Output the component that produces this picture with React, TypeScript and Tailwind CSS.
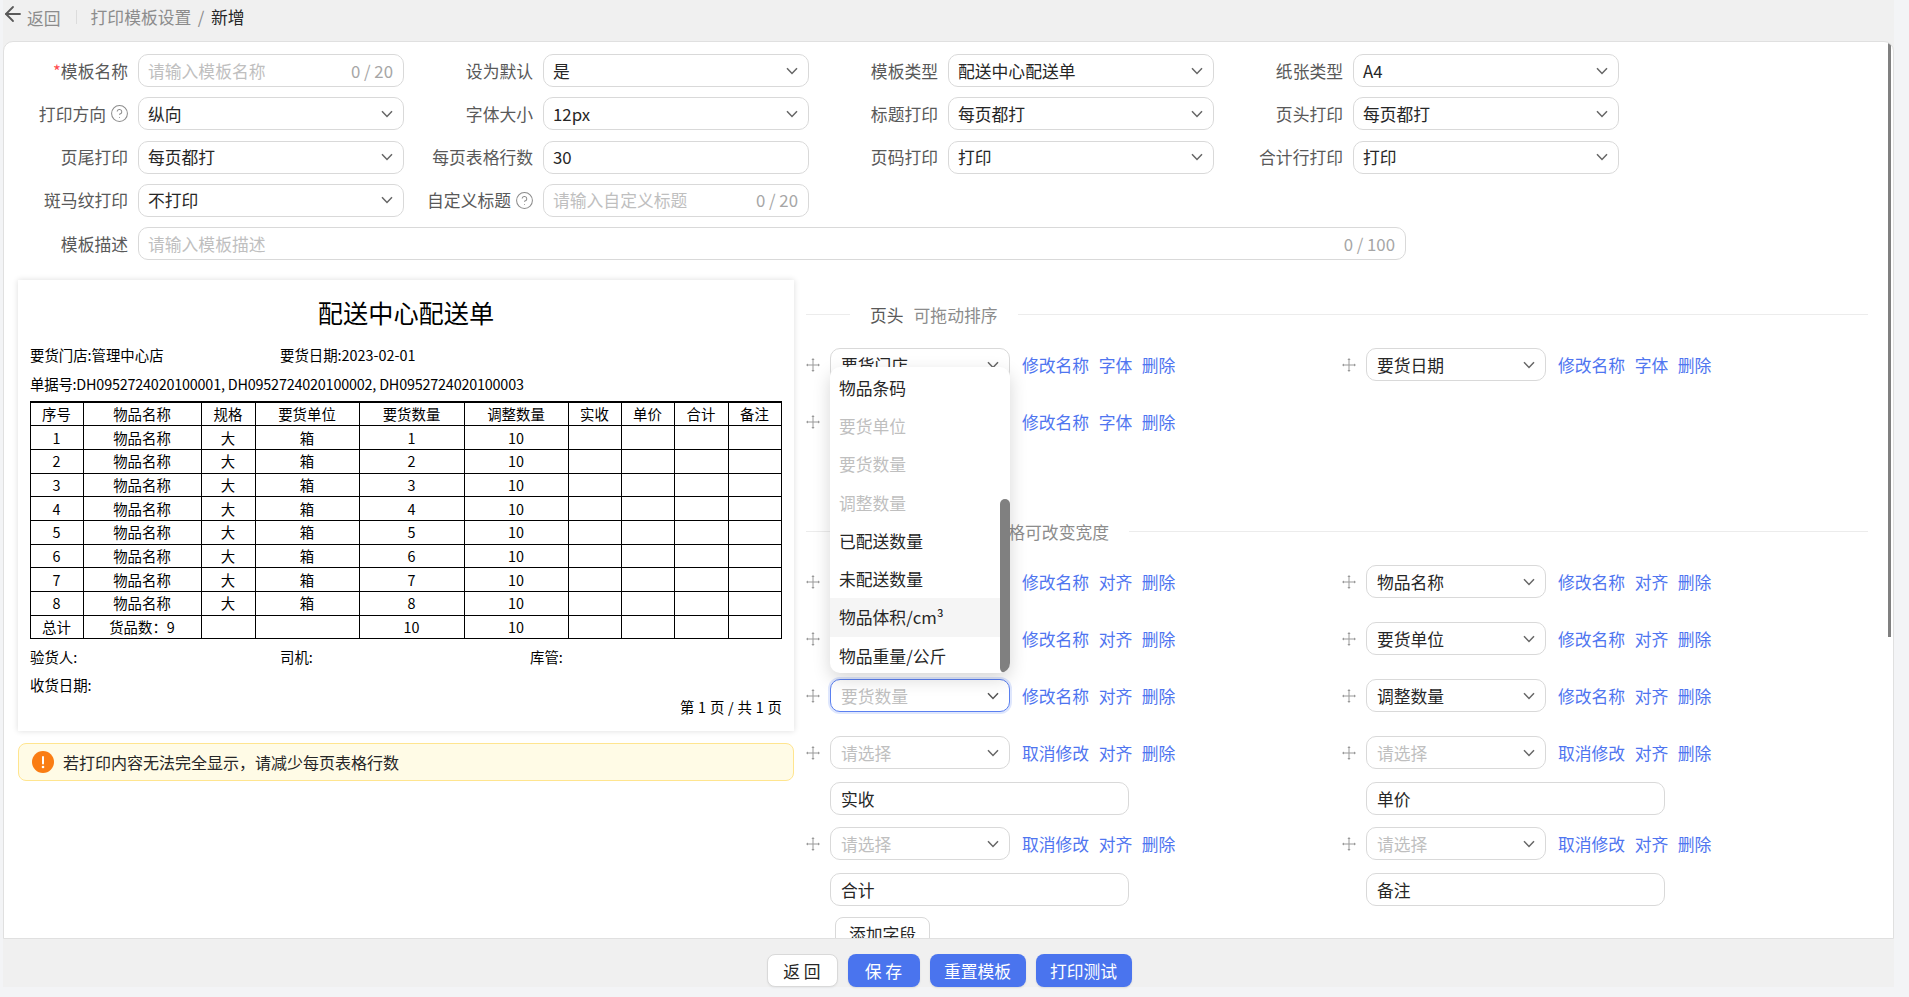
import type { ReactNode } from "react";
import { CircleHelp, ArrowLeft } from "lucide-react";

const Chevron = ({ dark }: { dark?: boolean }) => (
  <svg width="12" height="8" viewBox="0 0 12 8" fill="none" className="shrink-0">
    <path d="M1 1.2 6 6.4l5-5.2" stroke={dark ? "#555" : "#666"} strokeWidth="1.5" />
  </svg>
);

const DragIcon = () => (
  <svg width="14" height="14" viewBox="0 0 14 14" fill="#999" className="shrink-0">
    <rect x="6.5" y="1" width="1" height="12" />
    <rect x="1" y="6.5" width="12" height="1" />
    <path d="M7 0 8.6 2H5.4zM7 14l1.6-2H5.4zM0 7l2-1.6v3.2zM14 7l-2-1.6v3.2z" />
  </svg>
);

const Select = ({
  value,
  placeholder,
  focused,
  tight,
}: {
  value?: string;
  placeholder?: string;
  focused?: boolean;
  tight?: boolean;
}) => (
  <div
    className={
      "flex h-[33px] items-center justify-between rounded-[10px] border bg-white pr-[10px] " +
      (tight ? "pl-[9px] " : "pl-[10px] ") +
      (focused ? "border-[#5b80f0] shadow-[0_0_0_2px_#dfe7fd]" : "border-[#d9d9d9]")
    }
  >
    <span className={value ? "text-[#262626]" : "text-[#bfbfbf]"}>{value || placeholder}</span>
    <Chevron dark={focused} />
  </div>
);

const TextInput = ({
  value,
  placeholder,
  count,
  className = "",
}: {
  value?: string;
  placeholder?: string;
  count?: string;
  className?: string;
}) => (
  <div
    className={
      "flex h-[33px] items-center justify-between rounded-[10px] border border-[#d9d9d9] bg-white pr-[10px] " +
      className
    }
  >
    <span className={value ? "text-[#262626]" : "text-[#bfbfbf]"}>{value || placeholder}</span>
    {count && <span className="text-[#a6a6a6]">{count}</span>}
  </div>
);

type FormFieldDef = {
  label: string;
  required?: boolean;
  help?: boolean;
  select?: string;
  value?: string;
  placeholder?: string;
  count?: string;
};

const formFields: FormFieldDef[] = [
  { label: "模板名称", required: true, placeholder: "请输入模板名称", count: "0 / 20" },
  { label: "设为默认", select: "是" },
  { label: "模板类型", select: "配送中心配送单" },
  { label: "纸张类型", select: "A4" },
  { label: "打印方向", help: true, select: "纵向" },
  { label: "字体大小", select: "12px" },
  { label: "标题打印", select: "每页都打" },
  { label: "页头打印", select: "每页都打" },
  { label: "页尾打印", select: "每页都打" },
  { label: "每页表格行数", value: "30" },
  { label: "页码打印", select: "打印" },
  { label: "合计行打印", select: "打印" },
  { label: "斑马纹打印", select: "不打印" },
  { label: "自定义标题", help: true, placeholder: "请输入自定义标题", count: "0 / 20" },
];

const FormField = ({ f }: { f: FormFieldDef }) => (
  <div className="flex h-[33px] w-[405px] items-center">
    <label className="flex w-[124px] items-center justify-end text-[#595959]">
      {f.required && <span className="text-[#ff4d4f]">*</span>}
      {f.label}
      {f.help && <CircleHelp size={19} strokeWidth={1.3} color="#8c8c8c" className="-mr-[1px] ml-[4px]" />}
    </label>
    <div className="ml-[10px] w-[266px]">
      {f.select ? (
        <Select value={f.select} tight />
      ) : (
        <TextInput value={f.value} placeholder={f.placeholder} count={f.count} className="pl-[9px]" />
      )}
    </div>
  </div>
);

const Divider = ({ title, sub, subWidth }: { title: string; sub: string; subWidth?: string }) => (
  <div className="flex h-[22px] items-center">
    <div className="h-px w-[44px] bg-[#ececec]" />
    <div className={"mx-[20px] flex shrink-0 pt-[1px] " + (subWidth || "")}>
      <span className="mr-[10px] text-[#595959]">{title}</span>
      <span className="text-[#8c8c8c]">{sub}</span>
    </div>
    <div className="h-px flex-1 bg-[#ececec]" />
  </div>
);

const Links = ({ items }: { items: string[] }) => (
  <div className="ml-[12px] flex gap-[9.5px] text-[#4f75f0]">
    {items.map((t) => (
      <a key={t} className="cursor-pointer">
        {t}
      </a>
    ))}
  </div>
);

const Field = ({
  value,
  placeholder,
  focused,
  action,
  rename,
  children,
}: {
  value?: string;
  placeholder?: string;
  focused?: boolean;
  action: string;
  rename?: string;
  children?: ReactNode;
}) => (
  <div className={rename ? "pb-[12px]" : "pb-[24px]"}>
    <div className="flex items-center">
      <DragIcon />
      <div className="relative ml-[10px] w-[180px]">
        <Select value={value} placeholder={placeholder} focused={focused} />
        {children}
      </div>
      <Links items={[rename ? "取消修改" : "修改名称", action, "删除"]} />
    </div>
    {rename && <TextInput value={rename} className="ml-[24px] mt-[13px] w-[299px] pl-[10px]" />}
  </div>
);

const dropdownItems = [
  { t: "物品条码" },
  { t: "要货单位", off: true },
  { t: "要货数量", off: true },
  { t: "调整数量", off: true },
  { t: "已配送数量" },
  { t: "未配送数量" },
  { t: "物品体积/cm³", on: true },
  { t: "物品重量/公斤" },
];

const Dropdown = () => (
  <div className="absolute left-0 top-[19px] z-20 h-[306px] w-[180px] overflow-hidden rounded-[10px] bg-white pt-[1.5px] shadow-[0_6px_18px_rgba(0,0,0,0.16)]">
    {dropdownItems.map((d) => (
      <div
        key={d.t}
        className={
          "flex h-[38.3px] items-center pl-[9px] " +
          (d.off ? "text-[#bfbfbf] " : "text-[#262626] ") +
          (d.on ? "bg-[#f5f5f5]" : "")
        }
      >
        {d.t}
      </div>
    ))}
    <div className="absolute right-0 top-[132px] h-[174px] w-[10px] rounded-[5px] bg-[#808080]" />
  </div>
);

const columns = ["序号", "物品名称", "规格", "要货单位", "要货数量", "调整数量", "实收", "单价", "合计", "备注"];

const Cell = ({ children }: { children?: ReactNode }) => (
  <td className="border border-black p-0 text-center leading-[18px]">{children}</td>
);

const Preview = () => (
  <div className="h-[451px] w-[776px] bg-white pt-[17px] text-[14.4px] leading-[20px] text-black shadow-[0_0_6px_rgba(0,0,0,0.14)]">
    <h1 className="text-center text-[25.2px] leading-[30px]">配送中心配送单</h1>
    <div className="ml-[12px] mt-[18px] flex">
      <div className="w-[250px]">要货门店:管理中心店</div>
      <div>要货日期:2023-02-01</div>
    </div>
    <div className="ml-[12px] mt-[9px] tracking-[-0.2px]">
      单据号:DH0952724020100001, DH0952724020100002, DH0952724020100003
    </div>
    <table className="ml-[11.5px] mt-[7px] w-[751px] table-fixed border-collapse border-t-2 border-black">
      <colgroup>
        <col className="w-[53px]" />
        <col className="w-[118px]" />
        <col className="w-[54px]" />
        <col className="w-[104px]" />
        <col className="w-[105px]" />
        <col className="w-[104px]" />
        <col className="w-[53px]" />
        <col className="w-[53px]" />
        <col className="w-[54px]" />
        <col className="w-[53px]" />
      </colgroup>
      <tbody>
        <tr className="h-[23.7px]">
          {columns.map((c) => (
            <Cell key={c}>{c}</Cell>
          ))}
        </tr>
        {[1, 2, 3, 4, 5, 6, 7, 8].map((n) => (
          <tr key={n} className="h-[23.7px]">
            <Cell>{n}</Cell>
            <Cell>物品名称</Cell>
            <Cell>大</Cell>
            <Cell>箱</Cell>
            <Cell>{n}</Cell>
            <Cell>10</Cell>
            <Cell />
            <Cell />
            <Cell />
            <Cell />
          </tr>
        ))}
        <tr className="h-[23.7px]">
          <Cell>总计</Cell>
          <Cell>货品数：9</Cell>
          <Cell />
          <Cell />
          <Cell>10</Cell>
          <Cell>10</Cell>
          <Cell />
          <Cell />
          <Cell />
          <Cell />
        </tr>
      </tbody>
    </table>
    <div className="ml-[12px] mt-[8px] flex">
      <div className="w-[250px]">验货人:</div>
      <div className="w-[250px]">司机:</div>
      <div>库管:</div>
    </div>
    <div className="ml-[12px] mt-[8px]">收货日期:</div>
    <div className="mr-[12px] mt-[2px] text-right [word-spacing:0.6px]">第 1 页 / 共 1 页</div>
  </div>
);

export default function App() {
  return (
    <div className="h-[997px] w-[1909px] overflow-hidden bg-[#f3f4f6] font-['Noto_Sans_CJK_SC','Noto_Sans',sans-serif] text-[16.8px] leading-[24px]">
      <div className="ml-[3px] flex h-[987px] w-[1891px] flex-col bg-[#f0f0f0]">
        <header className="flex h-[41px] shrink-0 items-start pt-[5px] text-[#8c8c8c]">
          <ArrowLeft size={24} strokeWidth={1.8} color="#595959" className="-ml-[2px] -mt-[3px]" />
          <span className="ml-[2px] mt-[1px]">返回</span>
          <div className="ml-[15px] mt-[5px] h-[14px] w-px bg-[#dcdcdc]" />
          <span className="ml-[14px]">打印模板设置</span>
          <span className="mx-[6.5px]">/</span>
          <span className="text-[#262626]">新增</span>
        </header>

        <main className="relative h-[898px] shrink-0 overflow-hidden rounded-t-[10px] border border-[#e0e0e0] bg-white pt-[12px]">
          <div className="absolute right-[2px] top-0 h-[595px] w-[3px] bg-[#808080]" />

          <div className="flex flex-wrap gap-y-[10.25px]">
            {formFields.map((f) => (
              <FormField key={f.label} f={f} />
            ))}
            <div className="flex h-[33px] w-full items-center">
              <label className="w-[124px] text-right text-[#595959]">模板描述</label>
              <TextInput placeholder="请输入模板描述" count="0 / 100" className="ml-[10px] w-[1268px] pl-[9px]" />
            </div>
          </div>

          <div className="mt-[20px] flex">
            <div className="ml-[14px] w-[776px] shrink-0">
              <Preview />
              <div className="mt-[12px] flex h-[38px] items-center rounded-[8px] border border-[#ffe58f] bg-[#fffbe6] pl-[13px] text-[16px] text-[#262626]">
                <svg width="22" height="22" viewBox="0 0 22 22" className="mr-[9px] shrink-0">
                  <circle cx="11" cy="11" r="11" fill="#fa7d14" />
                  <rect x="10" y="5" width="2" height="8.5" rx="1" fill="#fff" />
                  <circle cx="11" cy="16" r="1.3" fill="#fff" />
                </svg>
                若打印内容无法完全显示，请减少每页表格行数
              </div>
            </div>

            <div className="ml-[12px] w-[1062px] shrink-0 pt-[23px]">
              <Divider title="页头" sub="可拖动排序" />
              <div className="mt-[23px] grid h-[172px] grid-cols-[536px_1fr] content-start">
                <Field value="要货门店" action="字体">
                  <Dropdown />
                </Field>
                <Field value="要货日期" action="字体" />
                <Field value="单据号" action="字体" />
              </div>
              <Divider title="表格" sub="可拖动，表格可改变宽度" subWidth="w-[239px] justify-between" />
              <div className="mt-[23px] grid grid-cols-[536px_1fr]">
                <Field value="序号" action="对齐" />
                <Field value="物品名称" action="对齐" />
                <Field value="规格" action="对齐" />
                <Field value="要货单位" action="对齐" />
                <Field placeholder="要货数量" focused action="对齐" />
                <Field value="调整数量" action="对齐" />
                <Field placeholder="请选择" action="对齐" rename="实收" />
                <Field placeholder="请选择" action="对齐" rename="单价" />
                <Field placeholder="请选择" action="对齐" rename="合计" />
                <Field placeholder="请选择" action="对齐" rename="备注" />
              </div>
              <button className="-mt-[1px] ml-[29px] h-[33px] w-[95px] rounded-[8px] border border-[#d9d9d9] bg-white text-[#262626]">
                添加字段
              </button>
            </div>
          </div>
        </main>

        <footer className="flex h-[48px] shrink-0 items-start justify-center gap-[10px] pl-[1px] pt-[15px]">
          <button className="h-[33px] w-[71px] rounded-[8px] border border-[#d9d9d9] bg-white text-[#262626] shadow-[0_1px_2px_rgba(0,0,0,0.06)]">
            返 回
          </button>
          <button className="h-[33px] w-[72px] rounded-[8px] bg-[#4a74ee] text-white shadow-[0_1px_2px_rgba(0,0,0,0.1)]">
            保 存
          </button>
          <button className="h-[33px] w-[96px] rounded-[8px] bg-[#4a74ee] text-white shadow-[0_1px_2px_rgba(0,0,0,0.1)]">
            重置模板
          </button>
          <button className="h-[33px] w-[96px] rounded-[8px] bg-[#4a74ee] text-white shadow-[0_1px_2px_rgba(0,0,0,0.1)]">
            打印测试
          </button>
        </footer>
      </div>
    </div>
  );
}
